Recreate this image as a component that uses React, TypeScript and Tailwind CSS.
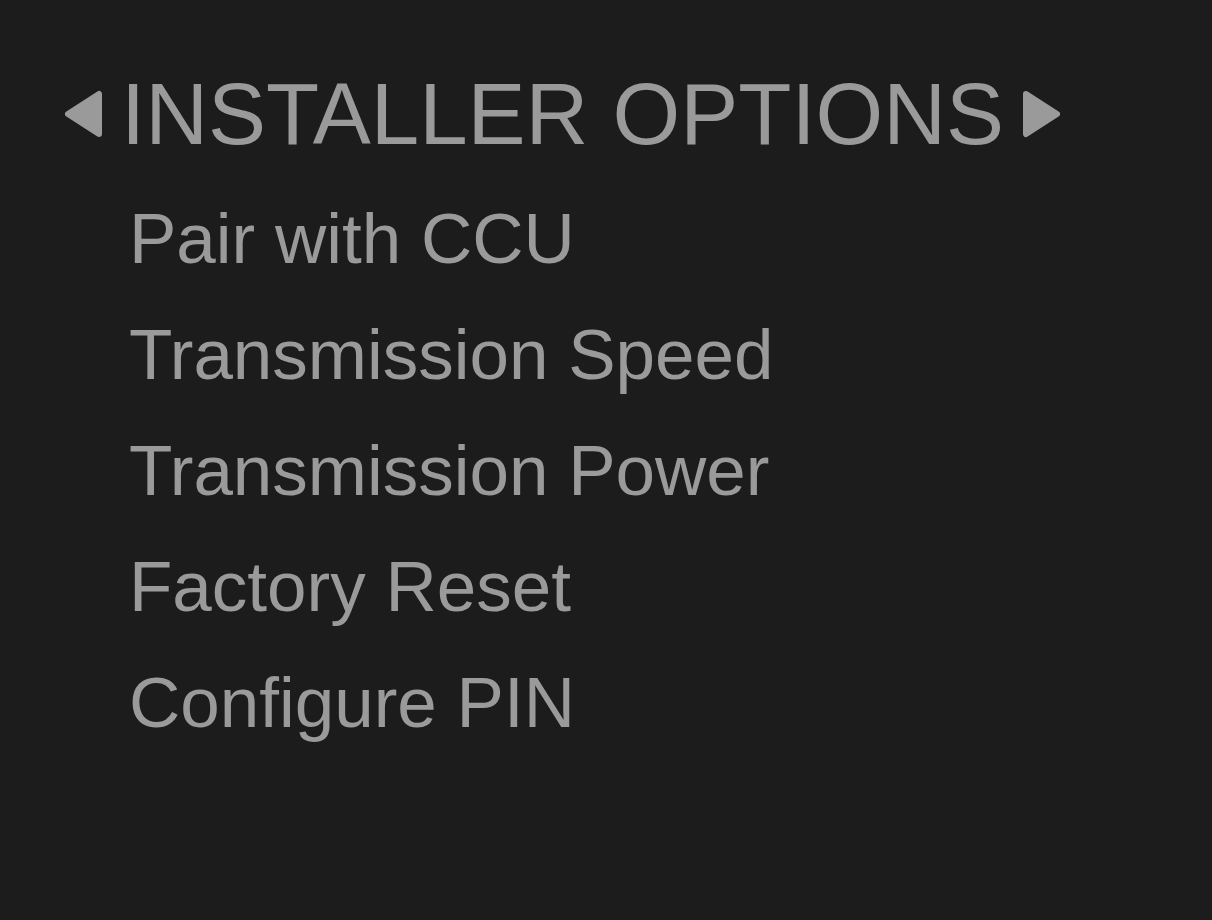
const items = [
  "Pair with CCU",
  "Transmission Speed",
  "Transmission Power",
  "Factory Reset",
  "Configure PIN",
];

function Arrow({ dir }: { dir: "left" | "right" }) {
  const points = dir === "left" ? "4,24 35,4 35,44" : "3,4 34,24 3,44";
  return (
    <svg width="38" height="48" viewBox="0 0 38 48" className="shrink-0">
      <polygon
        points={points}
        fill="#9a9a9a"
        stroke="#9a9a9a"
        strokeWidth="6"
        strokeLinejoin="round"
      />
    </svg>
  );
}

export default function App() {
  return (
    <div
      className="min-h-screen bg-[#1c1c1c] pt-[70px] pl-16 text-[#9a9a9a]"
      style={{ fontFamily: '"Liberation Sans", Arial, sans-serif' }}
    >
      <div className="flex h-[87px] items-center gap-[19px]">
        <Arrow dir="left" />
        <h1 className="text-[87px] leading-none whitespace-nowrap">INSTALLER OPTIONS</h1>
        <Arrow dir="right" />
      </div>
      <ul className="mt-[24px] pl-[65px]">
        {items.map((label) => (
          <li key={label} className="text-[71px] leading-[116px] whitespace-nowrap">
            {label}
          </li>
        ))}
      </ul>
    </div>
  );
}
